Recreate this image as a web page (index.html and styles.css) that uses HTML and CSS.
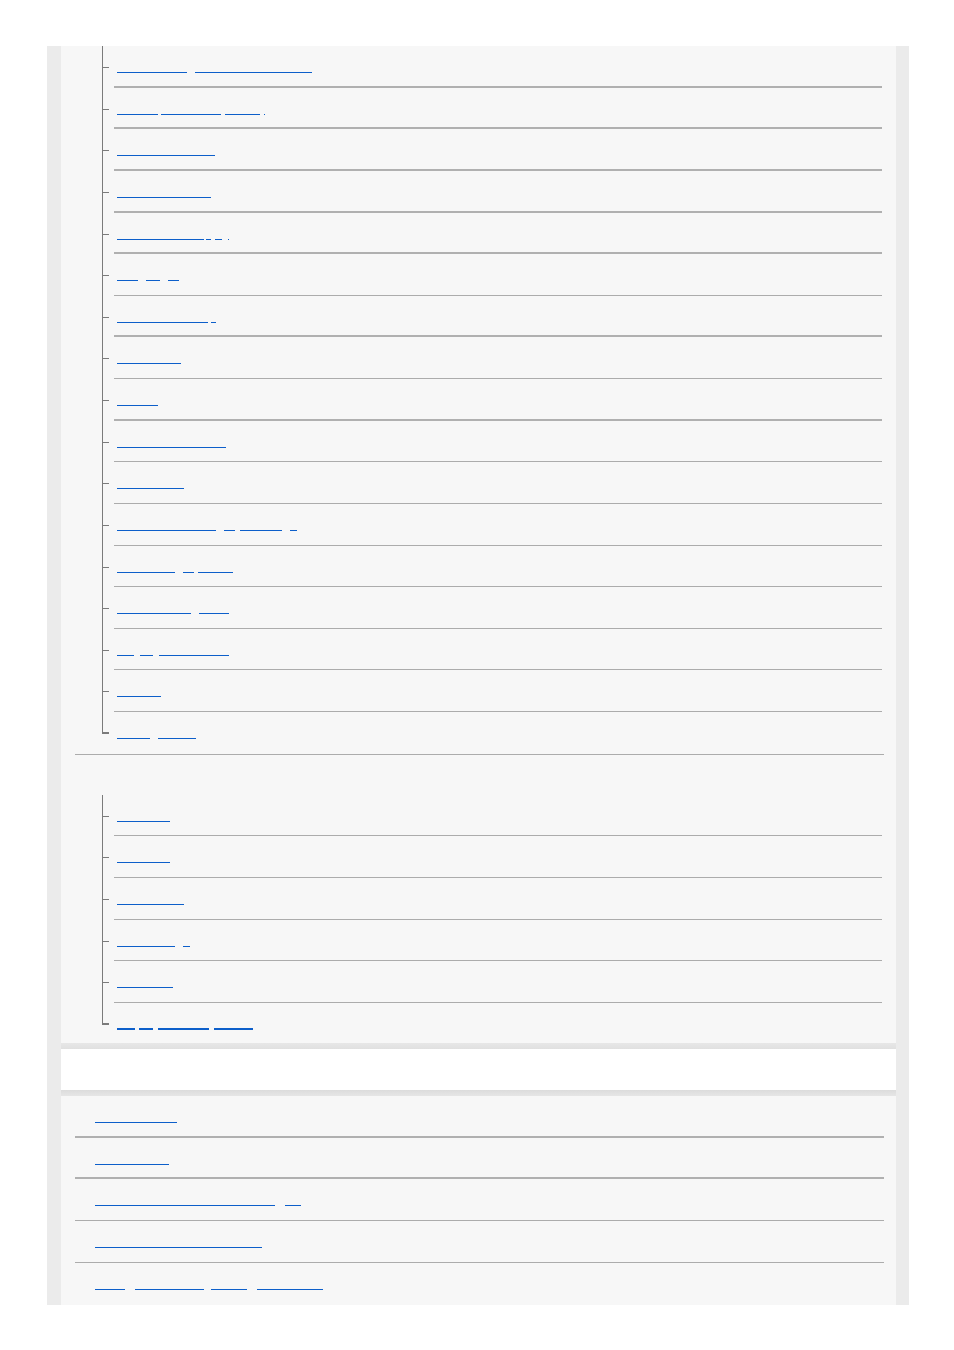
FILE: index.html
```html
<!DOCTYPE html>
<html lang="en">
<head>
  <meta charset="UTF-8" />
  <meta name="viewport" content="width=device-width, initial-scale=1.0"/>
  <title>Help Guide</title>
  <link rel="stylesheet" href="styles.css">
</head>
<body>
  <div class="frame">
    <!-- Top panel: two tree groups -->
    <div class="panel panel-top">
      <div class="group group-first">
        <ul class="tree">
          <li><div class="cell thick"><a class="lnk" href="#"><span class="u" style="width:70px"></span><span class="u" style="width:117px;margin-left:8px"></span></a></div></li>
          <li><div class="cell thick"><a class="lnk" href="#"><span class="u" style="width:41px"></span><span class="u" style="width:60px;margin-left:3px"></span><span class="u" style="width:35px;margin-left:4px"></span><span class="u" style="width:1px;margin-left:4px"></span></a></div></li>
          <li><div class="cell thick"><a class="lnk" href="#"><span class="u" style="width:98px"></span></a></div></li>
          <li><div class="cell thick"><a class="lnk" href="#"><span class="u" style="width:94px"></span></a></div></li>
          <li><div class="cell thick"><a class="lnk" href="#"><span class="u" style="width:87px"></span><span class="u" style="width:5px;margin-left:2px"></span><span class="u" style="width:7px;margin-left:4px"></span><span class="u" style="width:1px;margin-left:6px"></span></a></div></li>
          <li><div class="cell"><a class="lnk" href="#"><span class="u" style="width:21px"></span><span class="u" style="width:14px;margin-left:8px"></span><span class="u" style="width:11px;margin-left:8px"></span></a></div></li>
          <li><div class="cell thick"><a class="lnk" href="#"><span class="u" style="width:91px"></span><span class="u" style="width:5px;margin-left:3px"></span></a></div></li>
          <li><div class="cell"><a class="lnk" href="#"><span class="u" style="width:64px"></span></a></div></li>
          <li><div class="cell thick"><a class="lnk" href="#"><span class="u" style="width:41px"></span></a></div></li>
          <li><div class="cell"><a class="lnk" href="#"><span class="u" style="width:109px"></span></a></div></li>
          <li><div class="cell"><a class="lnk" href="#"><span class="u" style="width:67px"></span></a></div></li>
          <li><div class="cell"><a class="lnk" href="#"><span class="u" style="width:99px"></span><span class="u" style="width:11px;margin-left:8px"></span><span class="u" style="width:42px;margin-left:5px"></span><span class="u" style="width:7px;margin-left:8px"></span></a></div></li>
          <li><div class="cell"><a class="lnk" href="#"><span class="u" style="width:58px"></span><span class="u" style="width:11px;margin-left:8px"></span><span class="u" style="width:35px;margin-left:4px"></span></a></div></li>
          <li><div class="cell"><a class="lnk" href="#"><span class="u" style="width:74px"></span><span class="u" style="width:30px;margin-left:8px"></span></a></div></li>
          <li><div class="cell"><a class="lnk" href="#"><span class="u" style="width:17px"></span><span class="u" style="width:13px;margin-left:6px"></span><span class="u" style="width:70px;margin-left:6px"></span></a></div></li>
          <li><div class="cell"><a class="lnk" href="#"><span class="u" style="width:44px"></span></a></div></li>
          <li><div class="cell"><a class="lnk" href="#"><span class="u" style="width:33px"></span><span class="u" style="width:38px;margin-left:8px"></span></a></div></li>
        </ul>
      </div>

      <div class="group">
        <div class="group-title"></div>
        <ul class="tree">
          <li><div class="cell"><a class="lnk" href="#"><span class="u" style="width:53px"></span></a></div></li>
          <li><div class="cell"><a class="lnk" href="#"><span class="u" style="width:53px"></span></a></div></li>
          <li><div class="cell"><a class="lnk" href="#"><span class="u" style="width:67px"></span></a></div></li>
          <li><div class="cell"><a class="lnk" href="#"><span class="u" style="width:58px"></span><span class="u" style="width:7px;margin-left:8px"></span></a></div></li>
          <li><div class="cell"><a class="lnk" href="#"><span class="u" style="width:56px"></span></a></div></li>
          <li><div class="cell"><a class="lnk lnk-active" href="#"><span class="u" style="width:18px"></span><span class="u" style="width:14px;margin-left:4px"></span><span class="u" style="width:51px;margin-left:5px"></span><span class="u" style="width:39px;margin-left:5px"></span></a></div></li>
        </ul>
      </div>
    </div>

    <div class="band band-top"></div>
    <div class="section-head"></div>
    <div class="band band-bottom"></div>

    <!-- Bottom panel: flat list -->
    <div class="panel panel-bottom">
      <ul class="flat">
        <li class="thick"><a class="lnk" href="#"><span class="u" style="width:82px"></span></a></li>
        <li class="thick"><a class="lnk" href="#"><span class="u" style="width:74px"></span></a></li>
        <li><a class="lnk" href="#"><span class="u" style="width:180px"></span><span class="u" style="width:16px;margin-left:10px"></span></a></li>
        <li><a class="lnk" href="#"><span class="u" style="width:167px"></span></a></li>
        <li><a class="lnk" href="#"><span class="u" style="width:30px"></span><span class="u" style="width:69px;margin-left:10px"></span><span class="u" style="width:36px;margin-left:7px"></span><span class="u" style="width:66px;margin-left:10px"></span></a></li>
      </ul>
    </div>
  </div>
</body>
</html>
```

FILE: styles.css
```css
:root {
  --link: #0d5fca;
  --rule: #acacac;
  --tree: #7b7b7b;
  --row-h: 41.625px;
}

body {
  margin: 0;
  background: #fff;
  font-family: "Noto Sans", Arial, sans-serif;
}

.frame {
  width: 862px;
  margin: 46px 0 0 47px;
  padding: 0 13px 0 14px;
  box-sizing: border-box;
  background: #ebebeb;
}

.panel {
  background: #f7f7f7;
  padding: 0 12px 0 14px;
}

.panel-top {
  height: 997px;
  overflow: hidden;
}

ul {
  list-style: none;
  margin: 0;
  padding: 0;
}

/* groups of the tree */
.group-first {
  border-bottom: 1px solid var(--rule);
}

.group-title {
  height: 40px;
}

.tree {
  margin: 0 2px 0 27px;
}

.tree li {
  position: relative;
  padding-left: 12px;
}

/* vertical line and tick */
.tree li::before {
  content: "";
  position: absolute;
  left: 0;
  top: 0;
  height: 100%;
  border-left: 1px solid var(--tree);
}

.tree li::after {
  content: "";
  position: absolute;
  left: 0;
  top: 21px;
  width: 7px;
  border-top: 1px solid var(--tree);
}

.tree li:last-child::before {
  height: 22px;
}

.tree li:last-child::after {
  top: 20px;
  border-top-width: 2px;
}

.cell {
  height: var(--row-h);
  box-sizing: border-box;
  padding-left: 3px;
  border-bottom: 1px solid var(--rule);
}

.tree li:last-child .cell {
  border-bottom: none;
}

.cell.thick,
.flat li.thick {
  border-bottom: 2px solid #b0b0b0;
}

/* links: only the underline marks are visible */
.lnk {
  display: flex;
  padding-top: 26px;
  text-decoration: none;
}

.u {
  display: block;
  height: 1px;
  background: var(--link);
}

.lnk-active {
  padding-top: 25px;
}

.lnk-active .u {
  height: 2px;
}

/* white heading strip between panels */
.band {
  height: 6px;
}

.band-top {
  background: linear-gradient(#e7e7e7, #e0e0e0);
}

.band-bottom {
  background: linear-gradient(#dcdcdc, #e6e6e6);
}

.section-head {
  height: 41px;
  background: #fff;
}

.panel-bottom {
  height: 209px;
}

.flat li {
  height: var(--row-h);
  box-sizing: border-box;
  padding-left: 20px;
  border-bottom: 1px solid var(--rule);
}

.flat li:last-child {
  border-bottom: none;
}
```
